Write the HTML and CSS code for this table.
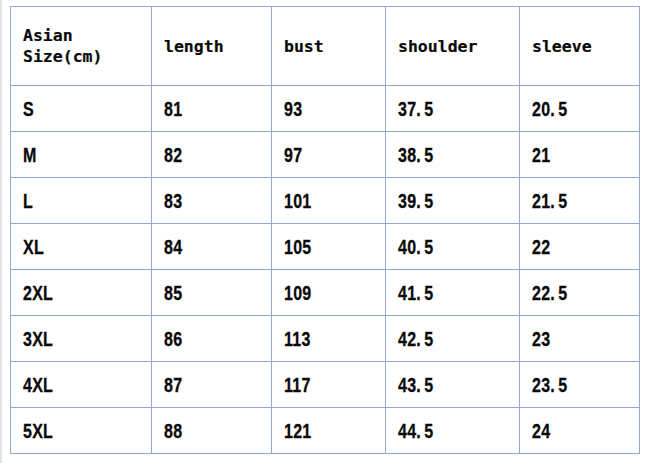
FILE: index.html
```html
<!DOCTYPE html>
<html>
<head>
<meta charset="utf-8">
<link rel="stylesheet" href="styles.css">
</head>
<body>
<div class="page">
<table class="size-table">
<colgroup>
<col class="c1"><col class="c2"><col class="c3"><col class="c4"><col class="c5">
</colgroup>
<thead>
<tr class="head-row">
<th><span class="hd">Asian<br>Size(cm)</span></th>
<th><span class="hd">length</span></th>
<th><span class="hd">bust</span></th>
<th><span class="hd">shoulder</span></th>
<th><span class="hd">sleeve</span></th>
</tr>
</thead>
<tbody>
<tr><td><span class="v">S</span></td><td><span class="v">81</span></td><td><span class="v">93</span></td><td><span class="v">37<span class="dot">.</span>5</span></td><td><span class="v">20<span class="dot">.</span>5</span></td></tr>
<tr><td><span class="v">M</span></td><td><span class="v">82</span></td><td><span class="v">97</span></td><td><span class="v">38<span class="dot">.</span>5</span></td><td><span class="v">21</span></td></tr>
<tr><td><span class="v">L</span></td><td><span class="v">83</span></td><td><span class="v">101</span></td><td><span class="v">39<span class="dot">.</span>5</span></td><td><span class="v">21<span class="dot">.</span>5</span></td></tr>
<tr><td><span class="v">XL</span></td><td><span class="v">84</span></td><td><span class="v">105</span></td><td><span class="v">40<span class="dot">.</span>5</span></td><td><span class="v">22</span></td></tr>
<tr><td><span class="v">2XL</span></td><td><span class="v">85</span></td><td><span class="v">109</span></td><td><span class="v">41<span class="dot">.</span>5</span></td><td><span class="v">22<span class="dot">.</span>5</span></td></tr>
<tr><td><span class="v">3XL</span></td><td><span class="v">86</span></td><td><span class="v">113</span></td><td><span class="v">42<span class="dot">.</span>5</span></td><td><span class="v">23</span></td></tr>
<tr><td><span class="v">4XL</span></td><td><span class="v">87</span></td><td><span class="v">117</span></td><td><span class="v">43<span class="dot">.</span>5</span></td><td><span class="v">23<span class="dot">.</span>5</span></td></tr>
<tr><td><span class="v">5XL</span></td><td><span class="v">88</span></td><td><span class="v">121</span></td><td><span class="v">44<span class="dot">.</span>5</span></td><td><span class="v">24</span></td></tr>
</tbody>
</table>
</div>
</body>
</html>
```
FILE: styles.css
```css
html, body {
  margin: 0;
  padding: 0;
  background: #ffffff;
}
.page {
  box-sizing: border-box;
  height: 463px;
  border-left: 2px solid #e2e2e2;
  padding: 6px 0 0 8px;
}
.size-table {
  border-collapse: collapse;
  table-layout: fixed;
  width: 629px;
  color: #0a0a0a;
}
.c1 { width: 141px; }
.c2 { width: 120px; }
.c3 { width: 114px; }
.c4 { width: 134px; }
.c5 { width: 120px; }
.size-table th,
.size-table td {
  border: 1px solid #8eaada;
  padding: 0 0 0 12px;
  text-align: left;
  vertical-align: middle;
  white-space: nowrap;
}
.head-row { height: 79px; }
.size-table tbody tr { height: 46px; }
.hd {
  font-family: "DejaVu Sans Mono", monospace;
  font-weight: bold;
  font-size: 16.5px;
  line-height: 21px;
  display: inline-block;
  -webkit-text-stroke: 0.2px #0a0a0a;
}
.v {
  display: inline-block;
  font-family: "Liberation Sans", Arial, sans-serif;
  font-weight: bold;
  font-size: 20px;
  line-height: 22px;
  transform: scaleX(0.8);
  transform-origin: left center;
  letter-spacing: 0.3px;
  -webkit-text-stroke: 0.3px #0a0a0a;
}
.dot {
  margin-right: 4px;
}
```
